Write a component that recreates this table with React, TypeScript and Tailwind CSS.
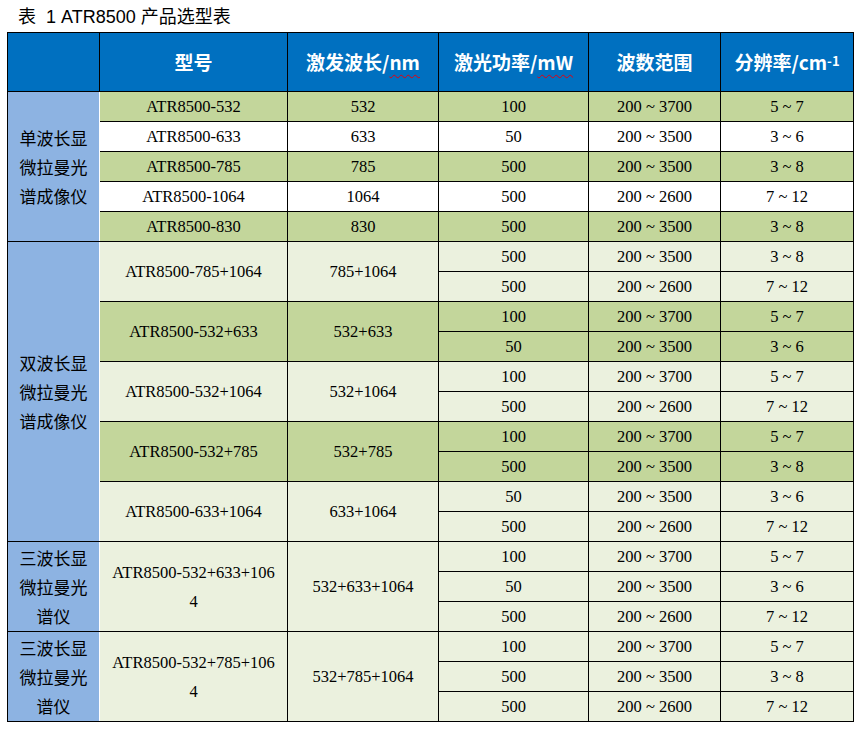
const cjk = "font-['Noto_Sans_CJK_SC',sans-serif]";
const title = "font-['Liberation_Sans','Noto_Sans_CJK_SC',sans-serif]";
const serif = "font-['Liberation_Serif','Noto_Sans_CJK_SC',serif]";

type Sub = { power: string; range: string; res: string };
type Row = { model: string[]; wave: string; bg: string; subs: Sub[] };
type Group = { label: string[]; rows: Row[] };

const GREEN = "bg-[#c3d69b]";
const LIGHT = "bg-[#ebf1de]";
const WHITE = "bg-white";

const groups: Group[] = [
  {
    label: ["单波长显", "微拉曼光", "谱成像仪"],
    rows: [
      { model: ["ATR8500-532"], wave: "532", bg: GREEN, subs: [{ power: "100", range: "200 ~ 3700", res: "5 ~ 7" }] },
      { model: ["ATR8500-633"], wave: "633", bg: WHITE, subs: [{ power: "50", range: "200 ~ 3500", res: "3 ~ 6" }] },
      { model: ["ATR8500-785"], wave: "785", bg: GREEN, subs: [{ power: "500", range: "200 ~ 3500", res: "3 ~ 8" }] },
      { model: ["ATR8500-1064"], wave: "1064", bg: WHITE, subs: [{ power: "500", range: "200 ~ 2600", res: "7 ~ 12" }] },
      { model: ["ATR8500-830"], wave: "830", bg: GREEN, subs: [{ power: "500", range: "200 ~ 3500", res: "3 ~ 8" }] },
    ],
  },
  {
    label: ["双波长显", "微拉曼光", "谱成像仪"],
    rows: [
      {
        model: ["ATR8500-785+1064"], wave: "785+1064", bg: LIGHT,
        subs: [{ power: "500", range: "200 ~ 3500", res: "3 ~ 8" }, { power: "500", range: "200 ~ 2600", res: "7 ~ 12" }],
      },
      {
        model: ["ATR8500-532+633"], wave: "532+633", bg: GREEN,
        subs: [{ power: "100", range: "200 ~ 3700", res: "5 ~ 7" }, { power: "50", range: "200 ~ 3500", res: "3 ~ 6" }],
      },
      {
        model: ["ATR8500-532+1064"], wave: "532+1064", bg: LIGHT,
        subs: [{ power: "100", range: "200 ~ 3700", res: "5 ~ 7" }, { power: "500", range: "200 ~ 2600", res: "7 ~ 12" }],
      },
      {
        model: ["ATR8500-532+785"], wave: "532+785", bg: GREEN,
        subs: [{ power: "100", range: "200 ~ 3700", res: "5 ~ 7" }, { power: "500", range: "200 ~ 3500", res: "3 ~ 8" }],
      },
      {
        model: ["ATR8500-633+1064"], wave: "633+1064", bg: LIGHT,
        subs: [{ power: "50", range: "200 ~ 3500", res: "3 ~ 6" }, { power: "500", range: "200 ~ 2600", res: "7 ~ 12" }],
      },
    ],
  },
  {
    label: ["三波长显", "微拉曼光", "谱仪"],
    rows: [
      {
        model: ["ATR8500-532+633+106", "4"], wave: "532+633+1064", bg: LIGHT,
        subs: [
          { power: "100", range: "200 ~ 3700", res: "5 ~ 7" },
          { power: "50", range: "200 ~ 3500", res: "3 ~ 6" },
          { power: "500", range: "200 ~ 2600", res: "7 ~ 12" },
        ],
      },
    ],
  },
  {
    label: ["三波长显", "微拉曼光", "谱仪"],
    rows: [
      {
        model: ["ATR8500-532+785+106", "4"], wave: "532+785+1064", bg: LIGHT,
        subs: [
          { power: "100", range: "200 ~ 3700", res: "5 ~ 7" },
          { power: "500", range: "200 ~ 3500", res: "3 ~ 8" },
          { power: "500", range: "200 ~ 2600", res: "7 ~ 12" },
        ],
      },
    ],
  },
];

const td = "border border-black text-center align-middle p-0 text-[16.5px] leading-[20px] text-black";
const th = "border border-black bg-[#0070c0] text-white text-center align-middle font-bold text-[19px] leading-[24px] p-0";

export default function App() {
  return (
    <div className="h-[731px] w-[859px] bg-white">
      <p className={`${title} pl-[18px] pt-[6px] text-[18px] leading-[22px] text-black`}>表 &nbsp;1 ATR8500 产品选型表</p>
      <table className="ml-[7px] mt-[4px] w-[846px] table-fixed border-collapse">
        <colgroup>
          <col className="w-[92px]" />
          <col className="w-[188px]" />
          <col className="w-[151px]" />
          <col className="w-[150px]" />
          <col className="w-[132px]" />
          <col className="w-[133px]" />
        </colgroup>
        <thead>
          <tr className={`h-[59px] ${cjk}`}>
            <th className={th}></th>
            <th className={th}>型号</th>
            <th className={th}>
              激发波长/<span className="underline decoration-wavy decoration-red-600 decoration-1 underline-offset-4">nm</span>
            </th>
            <th className={th}>
              激光功率/<span className="underline decoration-wavy decoration-red-600 decoration-1 underline-offset-4">mW</span>
            </th>
            <th className={th}>波数范围</th>
            <th className={th}>
              分辨率/cm<sup className="relative -top-[4px] text-[13px]">-1</sup>
            </th>
          </tr>
        </thead>
        <tbody className={serif}>
          {groups.flatMap((g, gi) => {
            const groupSpan = g.rows.reduce((n, r) => n + r.subs.length, 0);
            return g.rows.flatMap((r, ri) =>
              r.subs.map((s, si) => (
                <tr key={`${gi}-${ri}-${si}`} className="h-[30px]">
                  {ri === 0 && si === 0 && (
                    <td
                      rowSpan={groupSpan}
                      className={`${td} ${cjk} bg-[#8db3e2] !text-[17px] !leading-[29px] border-r-white`}
                    >
                      {g.label.map((l) => (
                        <div key={l}>{l}</div>
                      ))}
                    </td>
                  )}
                  {si === 0 && (
                    <>
                      <td rowSpan={r.subs.length} className={`${td} ${r.bg} !leading-[29px]`}>
                        {r.model.map((m) => (
                          <div key={m}>{m}</div>
                        ))}
                      </td>
                      <td rowSpan={r.subs.length} className={`${td} ${r.bg}`}>
                        {r.wave}
                      </td>
                    </>
                  )}
                  <td className={`${td} ${r.bg}`}>{s.power}</td>
                  <td className={`${td} ${r.bg}`}>{s.range}</td>
                  <td className={`${td} ${r.bg}`}>{s.res}</td>
                </tr>
              ))
            );
          })}
        </tbody>
      </table>
    </div>
  );
}
